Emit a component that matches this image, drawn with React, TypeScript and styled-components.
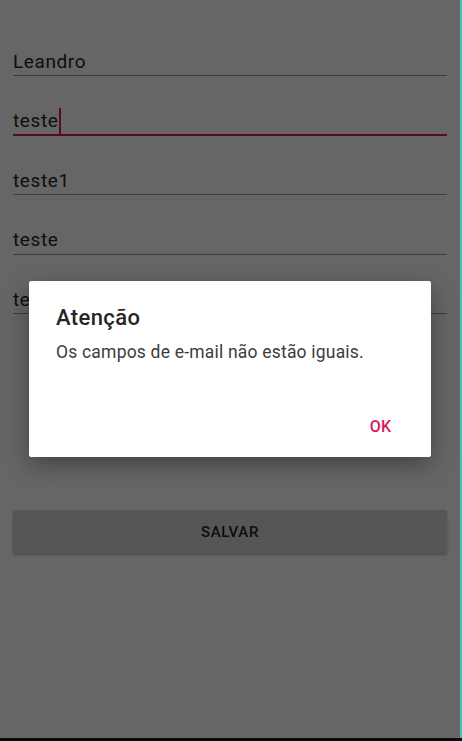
import React from "react";
import styled, { createGlobalStyle } from "styled-components";

const GlobalStyle = createGlobalStyle`
  html, body {
    margin: 0;
    padding: 0;
    background: #000;
  }
  body {
    font-family: Roboto, "Noto Sans", "Liberation Sans", sans-serif;
  }
`;

const Page = styled.div`
  width: 462px;
  height: 741px;
  display: flex;
  flex-direction: column;
  overflow: hidden;
`;

const Device = styled.div`
  display: flex;
  height: 738px;
`;

const Screen = styled.div`
  position: relative;
  width: 460px;
  height: 100%;
  background: #ffffff;
  overflow: hidden;
`;

const EdgeLine = styled.div`
  width: 2px;
  background: #3ec3d3;
`;

const BottomBar = styled.div`
  flex: 1;
  background: #0a0a0a;
`;

const Form = styled.div`
  display: flex;
  flex-direction: column;
  padding: 16.5px 13px 0 13px;
`;

const Field = styled.div<{ focused?: boolean }>`
  height: 59.5px;
  display: flex;
  align-items: flex-end;
  box-sizing: border-box;

  & > div {
    flex: 1;
    display: flex;
    align-items: center;
    height: 22px;
    padding-bottom: ${({ focused }) => (focused ? "2px" : "3px")};
    border-bottom: ${({ focused }) =>
      focused ? "2px solid #d81b60" : "1px solid #9a9a9a"};
    font-size: 19px;
    color: #262626;
    letter-spacing: 0.6px;
  }
`;

const Cursor = styled.span`
  display: inline-block;
  width: 2px;
  height: 26px;
  margin-left: 1px;
  background: #d81b60;
`;

const SaveButton = styled.button`
  margin-top: 196px;
  height: 43px;
  border: none;
  border-radius: 2px;
  background: #d6d6d6;
  box-shadow: 0 2px 3px rgba(0, 0, 0, 0.25);
  font-family: Roboto, "Noto Sans", sans-serif;
  font-size: 15px;
  font-weight: 500;
  letter-spacing: 0.6px;
  color: #212121;
  padding: 0;
`;

const Scrim = styled.div`
  position: absolute;
  inset: 0;
  background: rgba(0, 0, 0, 0.6);
  display: flex;
  align-items: center;
  justify-content: center;
`;

const Dialog = styled.div`
  width: 402px;
  height: 176px;
  box-sizing: border-box;
  background: #ffffff;
  border-radius: 2px;
  box-shadow: 0 8px 24px rgba(0, 0, 0, 0.35);
  padding: 25px 0 13px 27px;
  display: flex;
  flex-direction: column;
`;

const Title = styled.h2`
  margin: 0;
  font-size: 22px;
  line-height: 24px;
  font-weight: 500;
  letter-spacing: 0.4px;
  color: #262626;
`;

const Message = styled.p`
  margin: 11px 0 0 0;
  font-size: 17.5px;
  line-height: 22px;
  letter-spacing: 0.2px;
  color: #3c3c3c;
`;

const Actions = styled.div`
  margin-top: auto;
  display: flex;
  justify-content: flex-end;
  padding-right: 24px;
`;

const TextButton = styled.button`
  height: 36px;
  border: none;
  background: transparent;
  padding: 0 16px;
  font-family: Roboto, "Noto Sans", sans-serif;
  font-size: 16px;
  font-weight: 500;
  color: #d81b60;
`;

const fields = [
  { value: "Leandro" },
  { value: "teste", focused: true },
  { value: "teste1" },
  { value: "teste" },
  { value: "teste1" },
];

export default function App() {
  return (
    <>
      <GlobalStyle />
      <Page>
        <Device>
          <Screen>
            <Form>
              {fields.map((f, i) => (
                <Field key={i} focused={f.focused}>
                  <div>
                    {f.value}
                    {f.focused && <Cursor />}
                  </div>
                </Field>
              ))}
              <SaveButton>SALVAR</SaveButton>
            </Form>
            <Scrim>
              <Dialog>
                <Title>Atenção</Title>
                <Message>Os campos de e-mail não estão iguais.</Message>
                <Actions>
                  <TextButton>OK</TextButton>
                </Actions>
              </Dialog>
            </Scrim>
          </Screen>
          <EdgeLine />
        </Device>
        <BottomBar />
      </Page>
    </>
  );
}
